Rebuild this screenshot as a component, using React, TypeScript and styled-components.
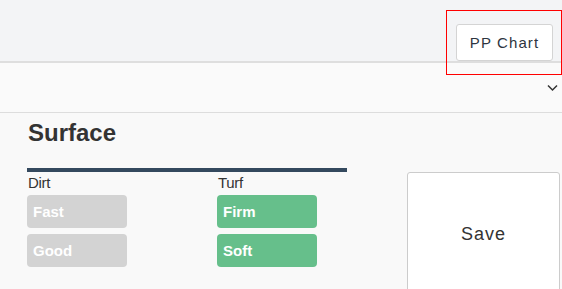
import React from "react";
import styled, { createGlobalStyle } from "styled-components";

const Global = createGlobalStyle`
  html, body { margin: 0; padding: 0; }
  body {
    background: #f9f9f9;
    font-family: "Liberation Sans", Arial, sans-serif;
    color: #333;
    overflow: hidden;
  }
`;

const Page = styled.div`
  position: relative;
  width: 562px;
  height: 289px;
  overflow: hidden;
  background: #f9f9f9;
`;

const Header = styled.header`
  height: 63px;
  box-sizing: border-box;
  background: #f3f4f6;
  border-bottom: 2px solid #dedede;
  display: flex;
  justify-content: flex-end;
  align-items: flex-start;
  padding: 24px 9px 0 0;
`;

const ChartButton = styled.button`
  width: 97px;
  height: 37px;
  box-sizing: border-box;
  background: #fff;
  border: 1px solid #d4d4d4;
  border-radius: 3px;
  font-family: "Liberation Sans", Arial, sans-serif;
  font-size: 15px;
  letter-spacing: 1.1px;
  color: #2d3540;
  padding: 0;
  cursor: pointer;
`;

const Highlight = styled.div`
  position: absolute;
  left: 446px;
  top: 10px;
  width: 116px;
  height: 65px;
  box-sizing: border-box;
  border: 1px solid #ff0000;
  pointer-events: none;
`;

const Collapse = styled.div`
  height: 50px;
  box-sizing: border-box;
  background: #fafafa;
  border-bottom: 1px solid #dddddd;
  display: flex;
  justify-content: flex-end;
  align-items: center;
  padding: 0 4px 0 0;
`;

const Content = styled.div`
  display: flex;
  align-items: flex-start;
  padding-left: 27px;
`;

const Section = styled.section`
  width: 320px;
`;

const Title = styled.h2`
  margin: 6px 0 0 1px;
  font-size: 24px;
  font-weight: bold;
  line-height: 28px;
  color: #333;
`;

const Rule = styled.div`
  margin-top: 21px;
  height: 4px;
  background: #34495e;
`;

const Columns = styled.div`
  display: grid;
  grid-template-columns: 190px 1fr;
`;

const Column = styled.div`
  display: flex;
  flex-direction: column;
  gap: 6px;
`;

const Label = styled.div`
  font-size: 15px;
  line-height: 17px;
  margin: 2px 0 -2px 1px;
  letter-spacing: -0.3px;
  color: #333;
`;

const Chip = styled.button<{ $active: boolean }>`
  width: 100px;
  height: 33px;
  box-sizing: border-box;
  border: none;
  border-radius: 4px;
  background: ${(p) => (p.$active ? "#66bf8b" : "#d3d3d3")};
  color: #fff;
  font-family: "Liberation Sans", Arial, sans-serif;
  font-size: 15px;
  font-weight: bold;
  text-align: left;
  padding: 0 0 0 6px;
  cursor: pointer;
`;

const SaveButton = styled.button`
  margin: 59px 0 0 60px;
  width: 153px;
  height: 124px;
  box-sizing: border-box;
  background: #fff;
  border: 1px solid #cccccc;
  border-radius: 3px;
  font-family: "Liberation Sans", Arial, sans-serif;
  font-size: 18px;
  letter-spacing: 1px;
  color: #333;
  padding: 0;
  flex-shrink: 0;
`;

const Chevron = () => (
  <svg width="11" height="8" viewBox="0 0 11 8" aria-hidden="true">
    <path d="M1 1.5 L5.5 6 L10 1.5" fill="none" stroke="#333" strokeWidth="1.5" />
  </svg>
);

const dirt = [
  { name: "Fast", active: false },
  { name: "Good", active: false },
];
const turf = [
  { name: "Firm", active: true },
  { name: "Soft", active: true },
];

export default function App() {
  return (
    <Page>
      <Global />
      <Header>
        <ChartButton>PP Chart</ChartButton>
      </Header>
      <Collapse>
        <Chevron />
      </Collapse>
      <Content>
        <Section>
          <Title>Surface</Title>
          <Rule />
          <Columns>
            <Column>
              <Label>Dirt</Label>
              {dirt.map((d) => (
                <Chip key={d.name} $active={d.active}>
                  {d.name}
                </Chip>
              ))}
            </Column>
            <Column>
              <Label>Turf</Label>
              {turf.map((d) => (
                <Chip key={d.name} $active={d.active}>
                  {d.name}
                </Chip>
              ))}
            </Column>
          </Columns>
        </Section>
        <SaveButton>Save</SaveButton>
      </Content>
      <Highlight />
    </Page>
  );
}
